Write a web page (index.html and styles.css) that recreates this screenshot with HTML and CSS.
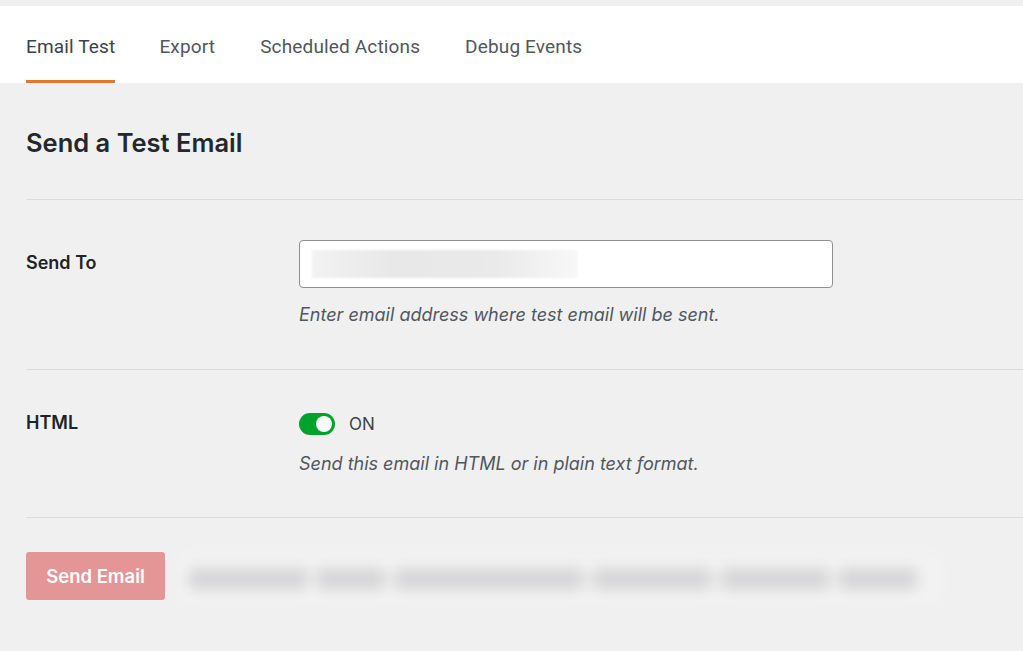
FILE: index.html
```html
<!DOCTYPE html>
<html lang="en">
<head>
    <meta charset="UTF-8">
    <title>Email Test</title>
    <link rel="stylesheet" href="styles.css">
</head>
<body>
    <div class="topstrip"></div>
    <nav class="tabs">
        <a class="tab active" href="#">Email Test</a>
        <a class="tab" href="#">Export</a>
        <a class="tab" href="#">Scheduled Actions</a>
        <a class="tab" href="#">Debug Events</a>
    </nav>

    <div class="content">
        <h2>Send a Test Email</h2>

        <div class="row row-email">
            <div class="label">Send To</div>
            <div class="field">
                <div class="input">
                    <span class="blurred-value"></span>
                </div>
                <p class="desc">Enter email address where test email will be sent.</p>
            </div>
        </div>

        <div class="row row-html">
            <div class="label">HTML</div>
            <div class="field">
                <div class="toggle-line">
                    <span class="toggle"><span class="knob"></span></span>
                    <span class="toggle-text">ON</span>
                </div>
                <p class="desc">Send this email in HTML or in plain text format.</p>
            </div>
        </div>

        <div class="actions">
            <button class="send-btn">Send Email</button>
            <div class="blurred-note">
                <span style="width:120px"></span>
                <span style="width:70px"></span>
                <span style="width:190px"></span>
                <span style="width:120px"></span>
                <span style="width:110px"></span>
                <span style="width:80px"></span>
            </div>
        </div>
    </div>
</body>
</html>
```

FILE: styles.css
```css
body {
    margin: 0;
    padding: 0;
    background-color: #f0f0f1;
    font-family: 'Inter', 'Roboto', sans-serif;
    color: #1d2327;
}
.topstrip {
    height: 6px;
    background-color: #f0f0f1;
}
.tabs {
    display: flex;
    height: 77px;
    background-color: #fff;
    padding-left: 26px;
    box-sizing: border-box;
}
.tab {
    display: flex;
    align-items: center;
    margin-right: 45px;
    font-family: 'Roboto', sans-serif;
    font-size: 19px;
    letter-spacing: 0.15px;
    color: #50575e;
    text-decoration: none;
    border-bottom: 3px solid transparent;
    padding-top: 6px;
}
.tab.active {
    border-bottom-color: #e27730;
    color: #3c434a;
    margin-right: 44px;
}
.content {
    padding-left: 26px;
}
h2 {
    margin: 0;
    padding: 43px 0 40px;
    font-size: 25.5px;
    font-weight: 600;
    color: #23282d;
    line-height: 33px;
    border-bottom: 1px solid #dcdcde;
}
.row {
    display: flex;
    border-bottom: 1px solid #dcdcde;
    padding-top: 40px;
}
.row-email {
    padding-bottom: 42px;
}
.row-html {
    padding-bottom: 41px;
}
.label {
    width: 273px;
    flex-shrink: 0;
    font-size: 18px;
    font-weight: 600;
    line-height: 26px;
    color: #1d2327;
}
.row-email .label {
    padding-top: 10px;
}
.input {
    width: 534px;
    height: 48px;
    box-sizing: border-box;
    background-color: #fff;
    border: 1px solid #8c8f94;
    border-radius: 4px;
    display: flex;
    align-items: center;
    padding-left: 12px;
}
.blurred-value {
    display: block;
    width: 266px;
    height: 28px;
    background: linear-gradient(90deg, #f2f2f2 0%, #e8e8e8 30%, #eaeaea 70%, #f8f8f8 100%);
    filter: blur(1px);
}
.desc {
    margin: 15px 0 0;
    font-size: 18px;
    font-style: italic;
    color: #50575e;
    line-height: 24px;
}
.row-html .desc {
    margin-top: 14px;
}
.toggle-line {
    display: flex;
    align-items: center;
    height: 28px;
}
.toggle {
    position: relative;
    width: 36px;
    height: 22px;
    border-radius: 11px;
    background-color: #00a32a;
}
.knob {
    position: absolute;
    right: 3px;
    top: 3px;
    width: 16px;
    height: 16px;
    border-radius: 50%;
    background-color: #fff;
}
.toggle-text {
    margin-left: 14px;
    font-size: 17px;
    color: #3c434a;
}
.actions {
    display: flex;
    align-items: flex-start;
    padding-top: 34px;
}
.send-btn {
    width: 139px;
    height: 48px;
    border: none;
    border-radius: 3px;
    background-color: #e49595;
    color: #fff;
    font-family: 'Inter', sans-serif;
    font-size: 18.5px;
    font-weight: 600;
}
.blurred-note {
    display: flex;
    align-items: center;
    gap: 8px;
    margin-left: 13px;
    margin-top: 1px;
    height: 52px;
    width: 762px;
    box-sizing: border-box;
    padding: 0 20px 0 10px;
    background-color: #f2f2f2;
    filter: blur(7px);
}
.blurred-note span {
    display: block;
    height: 22px;
    background-color: #d6d6d8;
    border-radius: 8px;
}
```
